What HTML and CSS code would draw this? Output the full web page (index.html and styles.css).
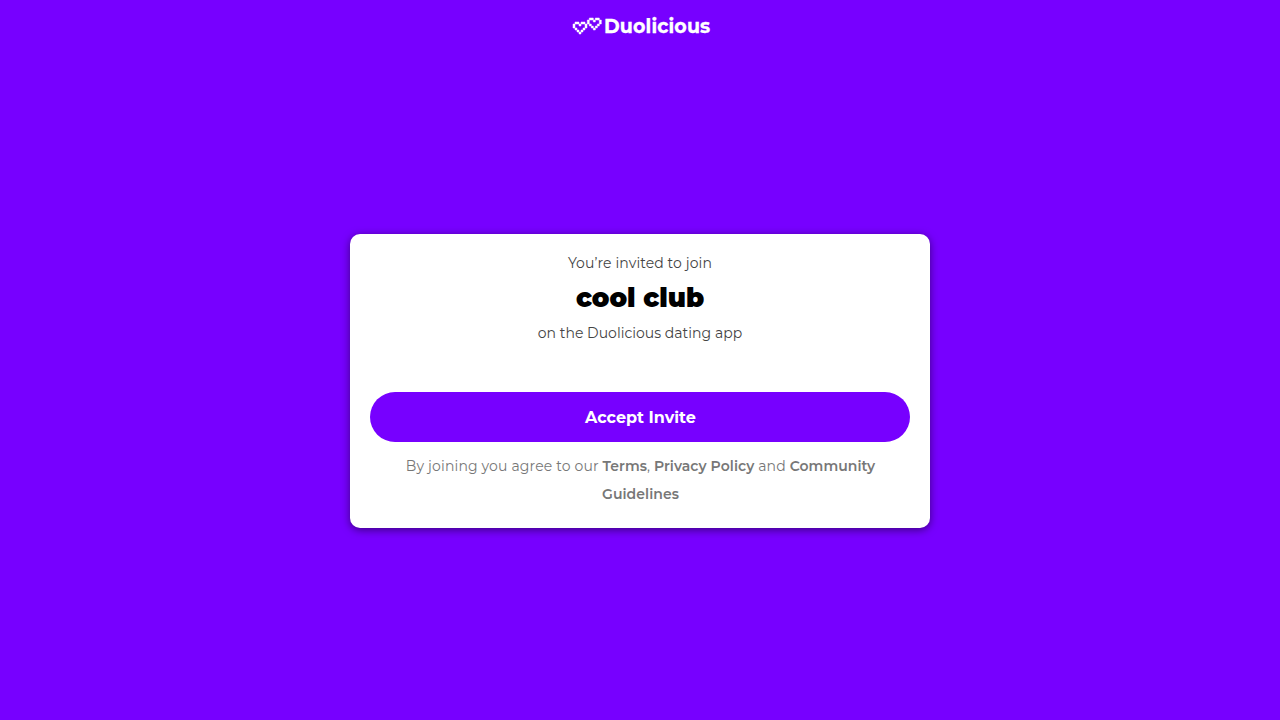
FILE: index.html
```
<!DOCTYPE html>
<html lang="en">
<head>
<meta charset="utf-8">
<title>Duolicious</title>
<link rel="stylesheet" href="styles.css">
</head>
<body>
<header class="header">
  <svg class="logo" viewBox="0 0 14 8" aria-hidden="true">
    <defs><path id="heart" d="M1 0h2v1h-2zM4 0h2v1h-2zM0 1h1v2h-1zM3 1h1v1h-1zM6 1h1v2h-1zM1 3h1v1h-1zM5 3h1v1h-1zM2 4h1v1h-1zM4 4h1v1h-1zM3 5h1v1h-1z"/></defs>
    <use href="#heart" y="2"/>
    <use href="#heart" x="7.15"/>
  </svg>
  <span class="brand">Duolicious</span>
</header>
<main class="stage">
  <section class="card">
    <p class="lead invited">You’re invited to join</p>
    <h1 class="club">cool club</h1>
    <p class="lead app">on the Duolicious dating app</p>
    <button class="accept">Accept Invite</button>
    <p class="terms">By joining you agree to our <b>Terms</b>, <b>Privacy Policy</b> and <b>Community Guidelines</b></p>
  </section>
</main>
</body>
</html>
```
FILE: styles.css
```
* { box-sizing: border-box; }
body {
  margin: 0;
  height: 100vh;
  display: flex;
  flex-direction: column;
  background: #7700ff;
  font-family: Montserrat, Inter, sans-serif;
  overflow: hidden;
}
.header {
  height: 42px;
  flex: none;
  display: flex;
  justify-content: center;
  padding: 11px 0 0 4px;
  color: #fff;
}
.logo { width: 28px; height: 16px; margin: 7px 3px 0 0; fill: #fff; stroke: #fff; stroke-width: .25px; overflow: visible; }
.brand { width: 107px; white-space: nowrap; font-size: 19px; line-height: 32px; font-weight: 700; letter-spacing: .12px; -webkit-text-stroke: .3px #fff; }
.stage { flex: 1; display: flex; align-items: center; justify-content: center; }
.card {
  width: 580px;
  height: 294px;
  padding: 20px;
  border-radius: 10px;
  background: #fff;
  box-shadow: 0 2px 8px rgba(0, 0, 0, .5);
  text-align: center;
}
.lead { margin: 0; font-size: 14px; line-height: 18px; font-weight: 400; color: #444; }
.invited { letter-spacing: .1px; }
.app { letter-spacing: .02px; }
.club { margin: 8px 0; font-size: 26px; line-height: 36px; font-weight: 900; color: #000; }
.accept {
  display: block;
  width: 100%;
  height: 50px;
  margin: 50px 0 10px;
  padding: 1px 0 0 1px;
  border: 0;
  border-radius: 25px;
  background: #7700ff;
  color: #fff;
  font: 700 16px/50px Montserrat, Inter, sans-serif;
}
.terms { margin: 0; padding: 0 29px 0 30px; font-size: 14px; line-height: 28px; font-weight: 400; letter-spacing: .15px; color: #777; }
.terms b { font-weight: 600; letter-spacing: .06px; }
```
